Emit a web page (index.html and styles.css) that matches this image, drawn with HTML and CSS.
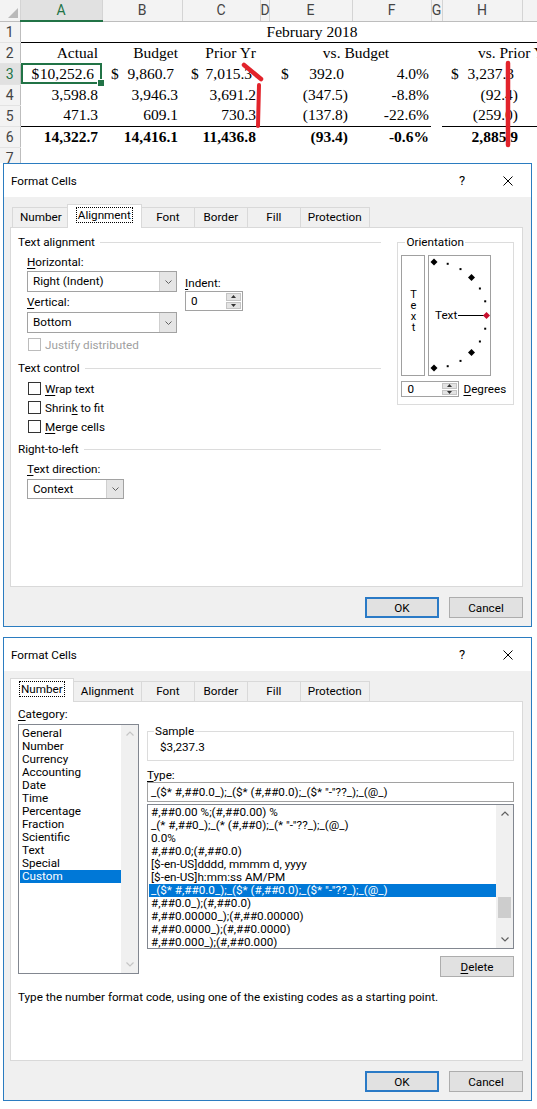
FILE: index.html
```html
<!DOCTYPE html>
<html lang="en">
<head>
  <meta charset="UTF-8" />
  <meta name="viewport" content="width=device-width, initial-scale=1.0" />
  <title>Format Cells</title>
  <link rel="stylesheet" href="styles.css">
</head>
<body>

<!-- Worksheet -->
<div class="sheet">
  <table class="grid">
    <colgroup>
      <col class="c-rh"><col class="c-a"><col class="c-b"><col class="c-c"><col class="c-d">
      <col class="c-e"><col class="c-f"><col class="c-g"><col class="c-h"><col class="c-i">
    </colgroup>
    <thead>
      <tr>
        <th class="corner">
          <svg width="20" height="20" viewBox="0 0 20 20"><polygon points="8,18 18,18 18,8" fill="#b9b9b9"/></svg>
        </th>
        <th class="sel">A</th><th>B</th><th>C</th><th>D</th><th>E</th><th>F</th><th>G</th><th>H</th><th></th>
      </tr>
    </thead>
    <tbody>
      <tr>
        <th>1</th>
        <td class="rule"></td>
        <td colspan="7" class="rule ctr">February 2018</td>
        <td class="rule"></td>
      </tr>
      <tr>
        <th>2</th>
        <td>Actual</td><td>Budget</td><td>Prior Yr</td><td></td>
        <td colspan="2" class="ctr nudge">vs. Budget</td><td></td>
        <td colspan="2" class="ctr">vs. Prior Yr</td>
      </tr>
      <tr>
        <th class="sel">3</th>
        <td class="active pos"><span class="cur tight">$</span>10,252.6</td>
        <td class="pos"><span class="cur">$</span>9,860.7</td>
        <td class="pos"><span class="cur">$</span>7,015.3</td>
        <td></td>
        <td class="pos"><span class="cur wide">$</span>392.0</td>
        <td class="pct">4.0%</td>
        <td></td>
        <td class="pos"><span class="cur">$</span>3,237.3</td>
        <td></td>
      </tr>
      <tr>
        <th>4</th>
        <td>3,598.8</td><td>3,946.3</td><td>3,691.2</td><td></td>
        <td>(347.5)</td><td class="pct">-8.8%</td><td></td>
        <td>(92.4)</td><td></td>
      </tr>
      <tr>
        <th>5</th>
        <td class="under">471.3</td><td class="under">609.1</td><td class="under">730.3</td><td class="under"></td>
        <td class="under">(137.8)</td><td class="under pct">-22.6%</td><td></td>
        <td class="under">(259.0)</td><td class="under"></td>
      </tr>
      <tr class="total">
        <th>6</th>
        <td>14,322.7</td><td>14,416.1</td><td>11,436.8</td><td></td>
        <td>(93.4)</td><td class="pct">-0.6%</td><td></td>
        <td>2,885.9</td><td></td>
      </tr>
      <tr>
        <th>7</th>
        <td></td><td></td><td></td><td></td><td></td><td></td><td></td><td></td><td></td>
      </tr>
    </tbody>
  </table>
  <!-- hand drawn marks -->
  <svg class="marks" width="537" height="163" viewBox="0 0 537 163">
    <path d="M244 65 L261 79" stroke="#e2232b" stroke-width="4.5" stroke-linecap="round" fill="none"/>
    <path d="M259 85 L258 126" stroke="#e2232b" stroke-width="4" stroke-linecap="round" fill="none"/>
    <path d="M508 63 L508 145" stroke="#e2232b" stroke-width="4.5" stroke-linecap="round" fill="none"/>
  </svg>
</div>

<!-- Format Cells: Alignment -->
<div class="dialog">
  <div class="titlebar">
    <span class="title">Format Cells</span>
    <span class="cap-btn">?</span>
    <span class="cap-btn">
      <svg width="10" height="10" viewBox="0 0 10 10"><path d="M0.5 0.5 L9.5 9.5 M9.5 0.5 L0.5 9.5" stroke="#000" stroke-width="1"/></svg>
    </span>
  </div>
  <div class="dlg-body">
    <div class="tabs">
      <span class="tab">Number</span>
      <span class="tab active"><span class="focus">Alignment</span></span>
      <span class="tab">Font</span>
      <span class="tab">Border</span>
      <span class="tab">Fill</span>
      <span class="tab">Protection</span>
    </div>

    <div class="panel align-panel">
      <div class="align-left">
        <div class="section">Text alignment</div>
        <div class="align-row">
          <div class="align-col">
            <div class="lbl"><u>H</u>orizontal:</div>
            <div class="combo wide">
              <span class="combo-text">Right (Indent)</span>
              <span class="drop"><svg width="7" height="4" viewBox="0 0 7 4"><path d="M0.5 0.5 L3.5 3.5 L6.5 0.5" fill="none" stroke="#606060"/></svg></span>
            </div>
            <div class="lbl gap"><u>V</u>ertical:</div>
            <div class="combo wide gap">
              <span class="combo-text">Bottom</span>
              <span class="drop"><svg width="7" height="4" viewBox="0 0 7 4"><path d="M0.5 0.5 L3.5 3.5 L6.5 0.5" fill="none" stroke="#606060"/></svg></span>
            </div>
          </div>
          <div class="indent-col">
            <div class="lbl"><u>I</u>ndent:</div>
            <div class="spin">
              <span class="spin-text">0</span>
              <span class="spin-btns">
                <span class="spin-b"><svg width="5" height="3" viewBox="0 0 5 3"><polygon points="0,3 2.5,0 5,3" fill="#333"/></svg></span>
                <span class="spin-b"><svg width="5" height="3" viewBox="0 0 5 3"><polygon points="0,0 2.5,3 5,0" fill="#333"/></svg></span>
              </span>
            </div>
          </div>
        </div>
        <div class="check-row disabled justify"><span class="cb"></span>Justify distributed</div>

        <div class="section tc">Text control</div>
        <div class="checks">
          <div class="check-row"><span class="cb"></span><span><u>W</u>rap text</span></div>
          <div class="check-row"><span class="cb"></span><span>Shrin<u>k</u> to fit</span></div>
          <div class="check-row"><span class="cb"></span><span><u>M</u>erge cells</span></div>
        </div>

        <div class="section rtl">Right-to-left</div>
        <div class="lbl sub"><u>T</u>ext direction:</div>
        <div class="combo ctx">
          <span class="combo-text">Context</span>
          <span class="drop"><svg width="7" height="4" viewBox="0 0 7 4"><path d="M0.5 0.5 L3.5 3.5 L6.5 0.5" fill="none" stroke="#606060"/></svg></span>
        </div>
      </div>

      <fieldset class="group orient">
        <legend>Orientation</legend>
        <div class="orient-row">
          <div class="vtext">
            <span>T</span><span>e</span><span>x</span><span>t</span>
          </div>
          <div class="dial">
            <svg width="61" height="119" viewBox="0 0 61 119">
              <polygon points="5,2.5 8.5,6 5,9.5 1.5,6" fill="#000"/>
              <rect x="17.7" y="6.8" width="2" height="2" fill="#000"/>
              <rect x="30.5" y="12.1" width="2" height="2" fill="#000"/>
              <polygon points="42.5,18 46,21.5 42.5,25 39,21.5" fill="#000"/>
              <rect x="49.9" y="31.5" width="2" height="2" fill="#000"/>
              <rect x="55.2" y="44.3" width="2" height="2" fill="#000"/>
              <rect x="55.2" y="71.7" width="2" height="2" fill="#000"/>
              <rect x="49.9" y="84.5" width="2" height="2" fill="#000"/>
              <polygon points="42.5,93 46,96.5 42.5,100 39,96.5" fill="#000"/>
              <rect x="30.5" y="103.9" width="2" height="2" fill="#000"/>
              <rect x="17.7" y="109.2" width="2" height="2" fill="#000"/>
              <polygon points="5,108.5 8.5,112 5,115.5 1.5,112" fill="#000"/>
              <text x="6" y="63" font-family="Roboto, sans-serif" font-size="11.7" fill="#000">Text</text>
              <path d="M29 59.5 L55 59.5" stroke="#000" stroke-width="1"/>
              <polygon points="57.5,56 61,59.5 57.5,63 54,59.5" fill="#c8102e"/>
            </svg>
          </div>
        </div>
        <div class="deg-row">
          <div class="spin small">
            <span class="spin-text">0</span>
            <span class="spin-btns">
              <span class="spin-b"><svg width="5" height="3" viewBox="0 0 5 3"><polygon points="0,3 2.5,0 5,3" fill="#333"/></svg></span>
              <span class="spin-b"><svg width="5" height="3" viewBox="0 0 5 3"><polygon points="0,0 2.5,3 5,0" fill="#333"/></svg></span>
            </span>
          </div>
          <span class="deg-lbl"><u>D</u>egrees</span>
        </div>
      </fieldset>
    </div>

    <div class="buttons">
      <button class="btn default">OK</button>
      <button class="btn">Cancel</button>
    </div>
  </div>
</div>

<!-- Format Cells: Number -->
<div class="dialog second">
  <div class="titlebar">
    <span class="title">Format Cells</span>
    <span class="cap-btn">?</span>
    <span class="cap-btn">
      <svg width="10" height="10" viewBox="0 0 10 10"><path d="M0.5 0.5 L9.5 9.5 M9.5 0.5 L0.5 9.5" stroke="#000" stroke-width="1"/></svg>
    </span>
  </div>
  <div class="dlg-body">
    <div class="tabs">
      <span class="tab active first"><span class="focus">Number</span></span>
      <span class="tab">Alignment</span>
      <span class="tab">Font</span>
      <span class="tab">Border</span>
      <span class="tab">Fill</span>
      <span class="tab">Protection</span>
    </div>

    <div class="panel num-panel">
      <div class="num-row">
        <div class="cat-col">
          <div class="lbl"><u>C</u>ategory:</div>
          <div class="listbox cat-list">
            <ul class="items">
              <li>General</li>
              <li>Number</li>
              <li>Currency</li>
              <li>Accounting</li>
              <li>Date</li>
              <li>Time</li>
              <li>Percentage</li>
              <li>Fraction</li>
              <li>Scientific</li>
              <li>Text</li>
              <li>Special</li>
              <li class="picked">Custom</li>
            </ul>
            <div class="vscroll off">
              <span class="arrow"><svg width="8" height="5" viewBox="0 0 8 5"><path d="M0.5 4.5 L4 1 L7.5 4.5" fill="none" stroke="#c5c5c5" stroke-width="1.2"/></svg></span>
              <span class="track"></span>
              <span class="arrow"><svg width="8" height="5" viewBox="0 0 8 5"><path d="M0.5 0.5 L4 4 L7.5 0.5" fill="none" stroke="#c5c5c5" stroke-width="1.2"/></svg></span>
            </div>
          </div>
        </div>

        <div class="fmt-col">
          <fieldset class="group sample">
            <legend>Sample</legend>
            <div class="sample-val">$3,237.3</div>
          </fieldset>
          <div class="lbl type-lbl"><u>T</u>ype:</div>
          <div class="textbox">_($* #,##0.0_);_($* (#,##0.0);_($* "-"??_);_(@_)</div>
          <div class="listbox type-list">
            <ul class="items">
              <li>#,##0.00 %;(#,##0.00) %</li>
              <li>_(* #,##0_);_(* (#,##0);_(* "-"??_);_(@_)</li>
              <li>0.0%</li>
              <li>#,##0.0;(#,##0.0)</li>
              <li>[$-en-US]dddd, mmmm d, yyyy</li>
              <li>[$-en-US]h:mm:ss AM/PM</li>
              <li class="picked">_($* #,##0.0_);_($* (#,##0.0);_($* "-"??_);_(@_)</li>
              <li>#,##0.0_);(#,##0.0)</li>
              <li>#,##0.00000_);(#,##0.00000)</li>
              <li>#,##0.0000_);(#,##0.0000)</li>
              <li>#,##0.000_);(#,##0.000)</li>
            </ul>
            <div class="vscroll">
              <span class="arrow"><svg width="8" height="5" viewBox="0 0 8 5"><path d="M0.5 4.5 L4 1 L7.5 4.5" fill="none" stroke="#606060" stroke-width="1.2"/></svg></span>
              <span class="track"><span class="thumb"></span></span>
              <span class="arrow"><svg width="8" height="5" viewBox="0 0 8 5"><path d="M0.5 0.5 L4 4 L7.5 0.5" fill="none" stroke="#606060" stroke-width="1.2"/></svg></span>
            </div>
          </div>
          <div class="del-row"><button class="btn"><u>D</u>elete</button></div>
        </div>
      </div>
      <p class="hint">Type the number format code, using one of the existing codes as a starting point.</p>
    </div>

    <div class="buttons">
      <button class="btn default">OK</button>
      <button class="btn">Cancel</button>
    </div>
  </div>
</div>

</body>
</html>
```

FILE: styles.css
```css
/* General */
* {
  box-sizing: border-box;
}

body {
  margin: 0;
  background: #ffffff;
  color: #000000;
  font-family: Roboto, "Noto Sans", sans-serif;
  font-size: 11.7px;
}

u {
  text-decoration: underline;
  text-underline-offset: 2px;
}

/* Worksheet */
.sheet {
  position: relative;
  height: 163px;
  overflow: hidden;
}

.grid {
  border-collapse: collapse;
  table-layout: fixed;
  width: 586px;
  font-family: "Liberation Serif", "Times New Roman", serif;
  font-size: 15.5px;
}

.c-rh { width: 20px; }
.c-a { width: 82px; }
.c-b { width: 80px; }
.c-c { width: 78px; }
.c-d { width: 9px; }
.c-e { width: 83px; }
.c-f { width: 79px; }
.c-g { width: 11px; }
.c-h { width: 80px; }
.c-i { width: 64px; }

.grid th {
  font-family: Roboto, sans-serif;
  font-weight: normal;
  font-size: 14px;
  color: #444444;
  background: #f3f3f3;
  padding: 0;
  text-align: center;
}

.grid thead th {
  height: 20px;
  border-right: 1px solid #d4d4d4;
  border-bottom: 1px solid #bdbdbd;
}

.grid thead th.corner {
  padding: 0;
  line-height: 0;
}

.grid tbody th {
  border-right: 1px solid #bdbdbd;
  border-bottom: 1px solid #e3e3e3;
}

.grid th.sel {
  background: #e1e1e1;
  color: #217346;
}

.grid thead th.sel {
  border-bottom: 2px solid #217346;
}

.grid tr {
  height: 21px;
}

.grid td {
  padding: 0 4px 0 0;
  text-align: right;
  white-space: nowrap;
  overflow: hidden;
  line-height: 20px;
}

.grid td.ctr {
  text-align: center;
  padding: 0;
}

.grid td.nudge {
  padding-left: 12px;
}

.grid td.pos {
  padding-right: 8px;
}

.grid td.pct {
  padding-right: 2px;
}

.grid td.rule {
  border-bottom: 1px solid #000000;
}

.grid td.under {
  border-bottom: 1px solid #000000;
}

.grid tr.total td {
  font-weight: bold;
}

.cur {
  float: left;
  margin-left: 9px;
}

.cur.tight {
  margin-left: 11px;
}

.cur.wide {
  margin-left: 12px;
}

.grid td.active {
  position: relative;
  overflow: visible;
  box-shadow: inset 0 0 0 2px #217346;
}

.grid td.active::after {
  content: '';
  position: absolute;
  right: -3px;
  bottom: -3px;
  width: 6px;
  height: 6px;
  background: #217346;
  border: 1px solid #ffffff;
}

.marks {
  position: absolute;
  top: 0;
  left: 0;
  pointer-events: none;
}

/* Dialog frame */
.dialog {
  width: 529px;
  margin-left: 3px;
  border: 1px solid #2b7cc0;
  background: #f0f0f0;
}

.dialog.second {
  margin-top: 10px;
}

.titlebar {
  height: 33px;
  background: #ffffff;
  display: flex;
  align-items: center;
  padding-left: 7px;
}

.title {
  flex: 1;
}

.cap-btn {
  width: 46px;
  height: 33px;
  display: flex;
  align-items: center;
  justify-content: center;
  font-size: 13px;
}

.dlg-body {
  padding: 10px 8px 8px 6px;
}

/* Tabs */
.tabs {
  display: flex;
  align-items: flex-end;
  height: 20px;
  margin-left: 2px;
  position: relative;
  z-index: 1;
}

.tab {
  height: 20px;
  line-height: 19px;
  min-width: 54px;
  padding: 0 7px;
  text-align: center;
  background: #f0f0f0;
  border: 1px solid #d9d9d9;
  border-bottom: none;
  margin-right: -1px;
}

.tab.active {
  position: relative;
  z-index: 2;
  height: 24px;
  line-height: 21px;
  margin: 0 -1px -1px -2px;
  padding: 0 9px;
  background: #ffffff;
}

.focus {
  outline: 1px dotted #000000;
  padding: 0 1px;
}

/* Panel */
.panel {
  height: 360px;
  border: 1px solid #d9d9d9;
  background: #ffffff;
  padding: 6px 8px 0 7px;
}

.lbl {
  height: 16px;
  line-height: 16px;
  white-space: nowrap;
}

.section {
  display: flex;
  align-items: center;
  height: 16px;
  white-space: nowrap;
}

.section::after {
  content: '';
  flex: 1;
  height: 1px;
  background: #dcdcdc;
  margin-left: 5px;
}

/* Alignment tab */
.align-panel {
  display: flex;
  align-items: flex-start;
}

.align-left {
  width: 365px;
}

.align-row {
  display: flex;
  padding-left: 9px;
  margin-top: 4px;
}

.combo {
  display: flex;
  height: 21px;
  border: 1px solid #a2a2a2;
  background: #ffffff;
  margin-top: 1px;
}

.combo.wide {
  width: 150px;
}

.combo.gap,
.lbl.gap {
  margin-top: 2px;
}

.combo-text {
  flex: 1;
  padding-left: 5px;
  line-height: 19px;
}

.drop {
  width: 17px;
  background: #e5e5e5;
  border-left: 1px solid #cfcfcf;
  display: flex;
  align-items: center;
  justify-content: center;
}

.indent-col {
  margin-left: 8px;
  margin-top: 21px;
}

.spin {
  display: flex;
  width: 58px;
  height: 20px;
  border: 1px solid #a2a2a2;
  background: #ffffff;
}

.spin.small {
  height: 16px;
}

.spin-text {
  flex: 1;
  padding-left: 5px;
  line-height: 18px;
}

.spin.small .spin-text {
  line-height: 14px;
}

.spin-btns {
  width: 15px;
  margin: 1px;
  display: flex;
  flex-direction: column;
  gap: 1px;
}

.spin-b {
  flex: 1;
  background: #e3e3e3;
  border: 1px solid #c4c4c4;
  display: flex;
  align-items: center;
  justify-content: center;
}

.check-row {
  display: flex;
  align-items: center;
  height: 19px;
  padding-left: 10px;
}

.cb {
  width: 13px;
  height: 13px;
  border: 1px solid #333333;
  background: #ffffff;
  margin-right: 4px;
}

.check-row.disabled {
  color: #a0a0a0;
}

.check-row.disabled .cb {
  border-color: #bcbcbc;
}

.check-row.justify {
  margin-top: 3px;
  height: 17px;
}

.section.tc {
  margin-top: 7px;
}

.checks {
  margin-top: 3px;
}

.section.rtl {
  margin-top: 5px;
}

.lbl.sub {
  margin-top: 4px;
  padding-left: 9px;
}

.combo.ctx {
  width: 97px;
  height: 20px;
  margin-top: 2px;
  margin-left: 9px;
}

.combo.ctx .combo-text {
  line-height: 18px;
}

/* Group boxes */
.group {
  margin: 0;
  padding: 0;
  border: 1px solid #dcdcdc;
  min-width: 0;
}

.group legend {
  padding: 0 1px;
  margin-left: 4px;
  line-height: 16px;
}

.orient {
  margin-left: 16px;
  width: 117px;
  padding: 5px 3px 7px 3px;
}

.orient-row {
  display: flex;
  gap: 3px;
}

.vtext {
  width: 24px;
  height: 121px;
  border: 1px solid #a0a0a0;
  display: flex;
  flex-direction: column;
  align-items: center;
  padding-top: 33px;
  font-size: 11px;
}

.vtext span {
  height: 11px;
  line-height: 11px;
}

.dial {
  width: 63px;
  height: 121px;
  border: 1px solid #a0a0a0;
  line-height: 0;
}

.deg-row {
  display: flex;
  align-items: center;
  margin-top: 5px;
}

.deg-lbl {
  margin-left: 4px;
}

/* Buttons */
.buttons {
  display: flex;
  justify-content: flex-end;
  gap: 10px;
  margin-top: 10px;
}

.btn {
  width: 74px;
  height: 21px;
  padding: 0;
  background: #e1e1e1;
  border: 1px solid #adadad;
  font-family: inherit;
  font-size: 11.7px;
  color: #000000;
}

.btn.default {
  border: 2px solid #2a7ac6;
}

/* Number tab */
.num-panel {
  padding-top: 4px;
}

.num-row {
  display: flex;
  align-items: flex-start;
}

.cat-col {
  width: 121px;
}

.listbox {
  display: flex;
  border: 1px solid #828790;
  background: #ffffff;
}

.cat-list {
  height: 250px;
  margin-top: 2px;
}

.items {
  flex: 1;
  list-style: none;
  margin: 0;
  padding: 1px 0 0 1px;
  min-width: 0;
}

.cat-list .items {
  padding-top: 2px;
}

.items li {
  height: 13px;
  line-height: 13px;
  padding-left: 2px;
  white-space: nowrap;
}

.items li.picked {
  background: #0078d7;
  color: #ffffff;
}

.vscroll {
  width: 17px;
  background: #f0f0f0;
  display: flex;
  flex-direction: column;
}

.arrow {
  height: 17px;
  display: flex;
  align-items: center;
  justify-content: center;
}

.track {
  flex: 1;
  padding: 0 2px;
}

.thumb {
  display: block;
  margin-top: 75px;
  height: 21px;
  background: #cdcdcd;
}

.fmt-col {
  flex: 1;
  margin-left: 8px;
  margin-top: 17px;
}

.sample {
  padding: 0 0 5px 0;
}

.sample legend {
  margin-left: 6px;
}

.sample-val {
  line-height: 16px;
  padding-left: 12px;
}

.lbl.type-lbl {
  height: 14px;
  line-height: 14px;
  margin-top: 7px;
}

.textbox {
  height: 20px;
  border: 1px solid #a2a2a2;
  background: #ffffff;
  padding-left: 3px;
  line-height: 18px;
  white-space: nowrap;
}

.type-list {
  height: 145px;
  margin-top: 2px;
}

.del-row {
  display: flex;
  justify-content: flex-end;
  margin-top: 7px;
}

.hint {
  margin: 12px 0 0;
  line-height: 16px;
}
```
